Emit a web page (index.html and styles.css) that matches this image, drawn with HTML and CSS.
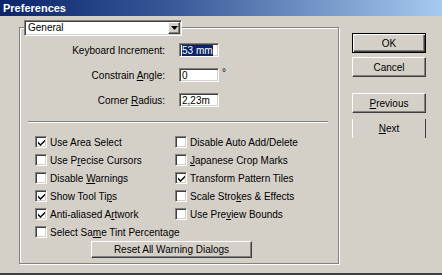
FILE: index.html
```html
<!DOCTYPE html>
<html>
<head>
<meta charset="utf-8">
<title>Preferences</title>
<link rel="stylesheet" href="styles.css">
</head>
<body>
<div class="window">
  <div class="titlebar">Preferences</div>
  <div class="main">
    <div class="group">
      <div class="select">
        <span class="sel-text">General</span>
        <span class="sel-btn"><svg width="7" height="4" viewBox="0 0 7 4"><polygon points="0,0 7,0 3.5,4" fill="#000"/></svg></span>
      </div>
      <div class="fields">
        <div class="field"><span class="label">Keyboard Increment:</span><span class="input"><span class="hl">53 mm</span></span></div>
        <div class="field"><span class="label">Constrain <u>A</u>ngle:</span><span class="input">0</span><span class="deg">°</span></div>
        <div class="field"><span class="label">Corner <u>R</u>adius:</span><span class="input">2,23m</span></div>
      </div>
      <div class="sep"></div>
      <div class="checks">
        <div class="check"><span class="box"><svg width="7" height="7" viewBox="0 0 7 7"><path d="M0 2.5 L2.5 5 L7 0.5 L7 2.5 L2.5 7 L0 4.5Z" fill="#000"/></svg></span><span>Use Area Select</span></div>
        <div class="check"><span class="box"></span><span>Disable Auto Add/Delete</span></div>
        <div class="check"><span class="box"></span><span>Use P<u>r</u>ecise Cursors</span></div>
        <div class="check"><span class="box"></span><span><u>J</u>apanese Crop Marks</span></div>
        <div class="check"><span class="box"></span><span>Disable <u>W</u>arnings</span></div>
        <div class="check"><span class="box"><svg width="7" height="7" viewBox="0 0 7 7"><path d="M0 2.5 L2.5 5 L7 0.5 L7 2.5 L2.5 7 L0 4.5Z" fill="#000"/></svg></span><span>Transform Pattern Tiles</span></div>
        <div class="check"><span class="box"><svg width="7" height="7" viewBox="0 0 7 7"><path d="M0 2.5 L2.5 5 L7 0.5 L7 2.5 L2.5 7 L0 4.5Z" fill="#000"/></svg></span><span>Show Tool Ti<u>p</u>s</span></div>
        <div class="check"><span class="box"></span><span>Scale Stro<u>k</u>es &amp; Effects</span></div>
        <div class="check"><span class="box"><svg width="7" height="7" viewBox="0 0 7 7"><path d="M0 2.5 L2.5 5 L7 0.5 L7 2.5 L2.5 7 L0 4.5Z" fill="#000"/></svg></span><span>Anti-aliased A<u>r</u>twork</span></div>
        <div class="check"><span class="box"></span><span>Use Pre<u>v</u>iew Bounds</span></div>
        <div class="check"><span class="box"></span><span>Select Sa<u>m</u>e Tint Percentage</span></div>
      </div>
      <button class="btn reset">Reset All Warning Dialogs</button>
    </div>
    <div class="buttons">
      <button class="btn default">OK</button>
      <button class="btn cancel">Cancel</button>
      <button class="btn prev"><span><u>P</u>revious</span></button>
      <button class="btn next"><span><u>N</u>ext</span></button>
    </div>
  </div>
</div>
</body>
</html>
```
FILE: styles.css
```css
* { box-sizing: border-box; }
html, body { margin: 0; padding: 0; }
body {
  width: 442px;
  height: 275px;
  overflow: hidden;
  background: #d4d0c8;
  font-family: "Liberation Sans", Arial, sans-serif;
  font-size: 10px;
  color: #000;
}
.window {
  height: 275px;
  display: flex;
  flex-direction: column;
  border-bottom: 2px solid #404040;
}
.titlebar {
  height: 16px;
  flex: none;
  background: linear-gradient(to right, #0a246a 0%, #3a5a9a 40%, #a6caf0 100%);
  color: #fff;
  font-weight: bold;
  font-size: 11px;
  line-height: 16px;
  padding-left: 3px;
}
.main {
  display: flex;
  align-items: flex-start;
  flex: 1;
}
.group {
  margin: 11px 0 0 19px;
  width: 320px;
  height: 237px;
  border: 1px solid #808080;
  box-shadow: 1px 1px 0 #fff, inset 1px 1px 0 #fff;
  display: flex;
  flex-direction: column;
  align-items: flex-start;
}
.select {
  margin: -8px 0 0 4px;
  width: 158px;
  height: 16px;
  padding: 1px;
  background: #fff;
  border: 1px solid;
  border-color: #808080 #fff #fff #808080;
  box-shadow: inset 1px 1px 0 #404040, inset -1px -1px 0 #d4d0c8;
  display: flex;
  align-items: stretch;
}
.sel-text {
  flex: 1;
  padding-left: 2px;
  line-height: 12px;
}
.sel-btn {
  width: 12px;
  background: #d4d0c8;
  border: 1px solid;
  border-color: #fff #404040 #404040 #fff;
  box-shadow: inset -1px -1px 0 #808080;
  display: flex;
  align-items: center;
  justify-content: center;
}
.fields {
  margin-top: 7px;
  display: flex;
  flex-direction: column;
  gap: 11px;
}
.field {
  display: flex;
  align-items: center;
  height: 14px;
}
.label {
  width: 145px;
  text-align: right;
  margin-right: 14px;
}
.input {
  width: 40px;
  height: 14px;
  padding: 1px 0 0 2px;
  background: #fff;
  border: 1px solid;
  border-color: #808080 #fff #fff #808080;
  box-shadow: inset 1px 1px 0 #404040, inset -1px -1px 0 #d4d0c8;
  line-height: 11px;
  white-space: nowrap;
  overflow: hidden;
}
.hl {
  background: #0a246a;
  color: #fff;
}
.deg {
  margin-left: 3px;
  align-self: flex-start;
  line-height: 10px;
}
.sep {
  margin: 14px 0 0 8px;
  width: 300px;
  height: 2px;
  border-top: 1px solid #808080;
  border-bottom: 1px solid #fff;
}
.checks {
  margin-top: 10px;
  padding-left: 15px;
  display: grid;
  grid-template-columns: 140px auto;
  grid-auto-rows: 18px;
}
.check {
  display: flex;
  align-items: center;
  gap: 3px;
  white-space: nowrap;
}
.box {
  width: 12px;
  height: 12px;
  flex: none;
  background: #fff;
  border: 1px solid;
  border-color: #808080 #fff #fff #808080;
  box-shadow: inset 1px 1px 0 #404040, inset -1px -1px 0 #d4d0c8;
  display: flex;
  align-items: center;
  justify-content: center;
}
.btn {
  font: inherit;
  color: #000;
  padding: 0;
  margin: 0;
  background: #d4d0c8;
  border: 1px solid;
  border-color: #fff #404040 #404040 #fff;
  box-shadow: inset -1px -1px 0 #808080;
  display: flex;
  align-items: center;
  justify-content: center;
}
.reset {
  margin-left: 71px;
  width: 161px;
  height: 17px;
}
.buttons {
  margin: 17px 0 0 13px;
  width: 74px;
  display: flex;
  flex-direction: column;
}
.buttons .btn { height: 20px; width: 74px; }
.default {
  border-color: #000;
  box-shadow: inset 1px 1px 0 #fff, inset -1px -1px 0 #404040, inset -2px -2px 0 #808080;
}
.cancel { margin-top: 4px; }
.prev { margin-top: 16px; }
.buttons .next {
  margin-top: 6px;
  height: 19px;
  border-top: none;
  border-bottom: none;
  box-shadow: none;
}
```
